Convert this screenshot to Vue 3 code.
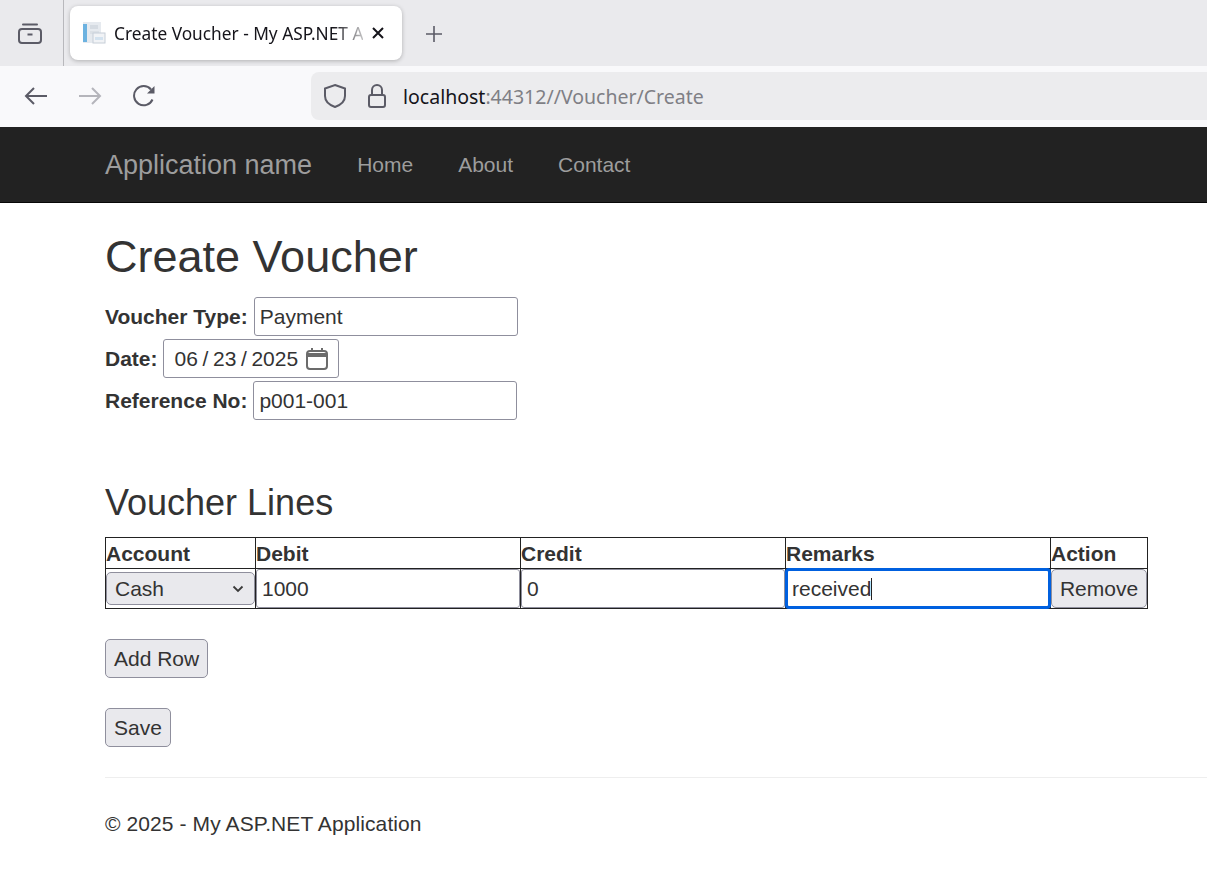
<template>
  <div class="page">
    <div class="tabbar">
      <div class="tabs-btn">
        <svg width="26" height="26" viewBox="0 0 26 26" fill="none" stroke="#5b5b66" stroke-width="2">
          <path d="M6 4.500h14" stroke-linecap="round" />
          <rect x="2" y="9" width="22" height="14" rx="3" />
          <path d="M10.500 14.500h5" />
        </svg>
      </div>
      <div class="tab">
        <svg class="favicon" width="24" height="24" viewBox="0 0 24 24">
          <rect x="1" y="1" width="18" height="21" fill="#e6eaef" />
          <rect x="1" y="3" width="4" height="18" fill="#6cb2e0" />
          <rect x="8" y="4" width="8" height="4" fill="#d5dbe2" />
          <rect x="8" y="10" width="9" height="3" fill="#dbe0e6" />
          <rect x="11" y="12" width="12" height="10" fill="#f1f3f6" stroke="#c6ced7" />
          <rect x="13" y="16" width="8" height="3" fill="#d3e2ef" />
        </svg>
        <span class="tab-title">Create Voucher - My ASP.NET A</span>
        <svg class="tab-close" width="14" height="14" viewBox="0 0 14 14" stroke="#15141a" stroke-width="2">
          <path d="M2 2l10 10M12 2L2 12" />
        </svg>
      </div>
      <svg class="new-tab" width="18" height="18" viewBox="0 0 18 18" stroke="#5b5b66" stroke-width="1.6">
        <path d="M9 1v16M1 9h16" />
      </svg>
    </div>

    <div class="toolbar">
      <div class="nav-btns">
        <svg width="26" height="24" viewBox="0 0 26 24" fill="none" stroke="#5b5b66" stroke-width="2">
          <path d="M24 12H3M11 4l-8 8 8 8" />
        </svg>
        <svg width="26" height="24" viewBox="0 0 26 24" fill="none" stroke="#b5b5bb" stroke-width="2">
          <path d="M2 12h21M15 4l8 8-8 8" />
        </svg>
        <svg class="reload" width="24" height="24" viewBox="0 0 24 24" fill="none" stroke="#5b5b66" stroke-width="2">
          <path d="M19.500 15.500A9.600 9.600 0 1 1 18 5.500" />
          <path d="M21.500 2v7.500H14z" fill="#5b5b66" stroke="none" />
        </svg>
      </div>
      <div class="urlbar">
        <svg width="24" height="26" viewBox="0 0 24 26" fill="none" stroke="#5b5b66" stroke-width="2">
          <path d="M12 2l10 3.500v7.500c0 5-4.500 9-10 11C6.500 22 2 18 2 13V5.500z" />
        </svg>
        <svg width="20" height="26" viewBox="0 0 20 26" fill="none" stroke="#5b5b66" stroke-width="2">
          <rect x="2" y="12" width="16" height="12" rx="2" />
          <path d="M5 12V7a5 5 0 0 1 10 0v5" />
        </svg>
        <span class="url"><span class="host">localhost</span>:44312//Voucher/Create</span>
      </div>
    </div>

    <nav class="navbar">
      <span class="brand">Application name</span>
      <a class="nav-link">Home</a>
      <a class="nav-link">About</a>
      <a class="nav-link">Contact</a>
    </nav>

    <main class="content">
      <h2>Create Voucher</h2>
      <div class="form-row">
        <label>Voucher Type:</label>
        <input class="field" type="text" value="Payment" />
      </div>
      <div class="form-row date-row">
        <label>Date:</label>
        <div class="date-field">
          <span>06 / 23 / 2025</span>
          <svg width="22" height="22" viewBox="0 0 22 22" fill="none" stroke="#6b6b6b" stroke-width="2">
            <rect x="1" y="3" width="20" height="18" rx="3" />
            <path d="M1 7h20" stroke-width="4" />
            <path d="M6 0v3M16 0v3" />
          </svg>
        </div>
      </div>
      <div class="form-row">
        <label>Reference No:</label>
        <input class="field" type="text" value="p001-001" />
      </div>

      <h3>Voucher Lines</h3>
      <table class="lines">
        <colgroup>
          <col v-for="w in colWidths" :key="w.name" :style="{ width: w.px + 'px' }" />
        </colgroup>
        <thead>
          <tr>
            <th v-for="w in colWidths" :key="w.name">{{ w.name }}</th>
          </tr>
        </thead>
        <tbody>
          <tr>
            <td>
              <div class="select-box">
                <span>Cash</span>
                <svg width="12" height="8" viewBox="0 0 12 8" fill="none" stroke="#3a3a3a" stroke-width="1.800">
                  <path d="M1.500 1.500L6 6l4.500-4.500" />
                </svg>
              </div>
            </td>
            <td><input class="cell-input" type="text" value="1000" /></td>
            <td><input class="cell-input" type="text" value="0" /></td>
            <td class="caret-cell">
              <input class="cell-input focused" type="text" value="received" />
              <span class="caret"></span>
            </td>
            <td><button class="btn remove">Remove</button></td>
          </tr>
        </tbody>
      </table>

      <button class="btn add-row">Add Row</button>
      <button class="btn save">Save</button>

      <hr />
      <footer>© 2025 - My ASP.NET Application</footer>
    </main>
  </div>
</template>

<script setup>
const colWidths = [
  { name: 'Account', px: 150 },
  { name: 'Debit', px: 265 },
  { name: 'Credit', px: 265 },
  { name: 'Remarks', px: 265 },
  { name: 'Action', px: 97 }
]
</script>

<style>
html, body {
  margin: 0;
  background: #fff;
  overflow: hidden;
}
</style>

<style scoped>
.page {
  width: 1207px;
  height: 883px;
  overflow: hidden;
  font-family: "Liberation Sans", Arial, sans-serif;
  font-size: 21px;
  color: #333;
}

/* browser chrome */
.tabbar {
  height: 66px;
  box-sizing: border-box;
  background: #eaeaed;
  display: flex;
  align-items: flex-start;
}

.tabs-btn {
  width: 64px;
  height: 66px;
  box-sizing: border-box;
  border-right: 1px solid #b8b8bc;
  display: flex;
  align-items: center;
  padding-left: 17px;
}

.tab {
  margin: 6px 0 0 6px;
  width: 332px;
  height: 54px;
  box-sizing: border-box;
  padding: 0 17px 0 12px;
  background: #fff;
  border-radius: 8px;
  box-shadow: 0 1px 4px rgba(0, 0, 0, 0.25);
  display: flex;
  align-items: center;
  gap: 8px;
}

.favicon {
  flex: none;
}

.tab-title {
  flex: 1;
  min-width: 0;
  white-space: nowrap;
  font-family: "Noto Sans", "Open Sans", sans-serif;
  font-size: 17.300px;
  color: #15141a;
  -webkit-mask-image: linear-gradient(to right, #000 88%, rgba(0, 0, 0, 0.25) 100%);
  mask-image: linear-gradient(to right, #000 88%, rgba(0, 0, 0, 0.25) 100%);
}

.tab-close {
  flex: none;
}

.new-tab {
  margin: 25px 0 0 23px;
}

.toolbar {
  height: 61px;
  box-sizing: border-box;
  padding-top: 6px;
  background: #f9f9fb;
  display: flex;
  align-items: flex-start;
}

.nav-btns {
  width: 311px;
  height: 48px;
  box-sizing: border-box;
  padding-left: 23px;
  display: flex;
  align-items: center;
  gap: 28px;
}

.reload {
  margin-left: 2px;
}

.urlbar {
  flex: 1;
  height: 48px;
  box-sizing: border-box;
  padding-left: 12px;
  background: #ececee;
  border-radius: 8px 0 0 8px;
  display: flex;
  align-items: center;
  gap: 20px;
}

.url {
  margin-left: -4px;
  font-family: "Noto Sans", "Open Sans", sans-serif;
  font-size: 19.500px;
  color: #7f7f85;
}

.host {
  color: #15141a;
}

/* site navbar */
.navbar {
  height: 76px;
  box-sizing: border-box;
  padding-left: 105px;
  background: #222;
  border-bottom: 1px solid #080808;
  display: flex;
  align-items: center;
  color: #9d9d9d;
}

.brand {
  font-size: 27px;
  margin-right: 45px;
  padding-top: 2px;
}

.nav-link {
  margin-right: 45px;
}

/* page content */
.content {
  padding-left: 105px;
}

h2 {
  margin: 29px 0 15px;
  font-size: 45px;
  font-weight: 500;
  line-height: 1.1;
  height: 50px;
}

h3 {
  margin: 63px 0 14px;
  font-size: 36px;
  font-weight: 500;
  line-height: 1.1;
}

.form-row {
  height: 39px;
  margin-bottom: 3px;
  display: flex;
  align-items: center;
  gap: 6px;
}

.date-row {
  gap: 5px;
}

label {
  font-weight: 700;
}

.field,
.date-field {
  height: 39px;
  box-sizing: border-box;
  border: 1px solid #8f8f9d;
  border-radius: 3px;
  font: inherit;
  color: #333;
  background: #fff;
}

.field {
  width: 264px;
  padding: 0 5px;
  outline: none;
}

.date-field {
  width: 176px;
  padding: 0 10px 0 11px;
  display: flex;
  align-items: center;
  justify-content: space-between;
  word-spacing: -1.200px;
}

.lines {
  width: 1042px;
  table-layout: fixed;
  border-collapse: collapse;
}

.lines th,
.lines td {
  border: 1px solid #222;
  padding: 0;
  text-align: left;
  vertical-align: middle;
}

.lines th {
  height: 28px;
  padding-top: 2px;
  font-weight: 700;
  line-height: 28px;
}

.lines td {
  height: 39px;
}

.select-box {
  width: 149px;
  height: 33px;
  box-sizing: border-box;
  padding: 2px 10px 0 8px;
  background: #e9e9ed;
  border: 1px solid #8f8f9d;
  border-radius: 5px;
  display: flex;
  align-items: center;
  justify-content: space-between;
}

.cell-input {
  display: block;
  width: 100%;
  height: 39px;
  box-sizing: border-box;
  padding: 2px 5px 0;
  border: 1px solid #8f8f9d;
  border-radius: 3px;
  font: inherit;
  color: #333;
  background: #fff;
  outline: none;
}

.focused {
  width: calc(100% + 2px);
  height: 41px;
  margin: -1px;
  border: 3px solid #0060df;
  border-radius: 4px;
  padding: 2px 4px 0;
}

.caret-cell {
  position: relative;
}

.caret {
  position: absolute;
  left: 85px;
  top: 9px;
  width: 1px;
  height: 22px;
  background: #222;
}

.btn {
  display: block;
  height: 39px;
  box-sizing: border-box;
  padding: 2px 8px 0;
  background: #e9e9ed;
  border: 1px solid #8f8f9d;
  border-radius: 5px;
  font: inherit;
  color: #333;
}

.remove {
  width: 96px;
  padding: 2px 0 0;
}

.add-row {
  margin-top: 30px;
}

.save {
  margin-top: 30px;
}

hr {
  margin: 30px 0 0;
  height: 1px;
  border: 0;
  background: #eee;
}

footer {
  margin-top: 32px;
  line-height: 27px;
  letter-spacing: 0.100px;
}
</style>
